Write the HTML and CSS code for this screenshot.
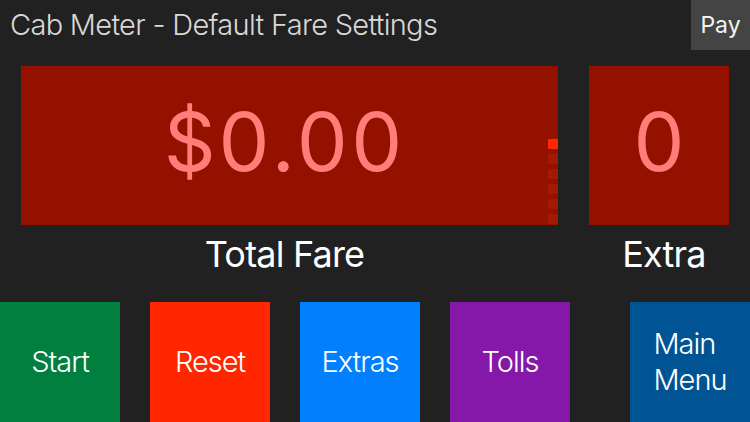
FILE: index.html
```html
<!DOCTYPE html>
<html lang="en">
<head>
  <meta charset="UTF-8">
  <meta name="viewport" content="width=device-width, initial-scale=1.0">
  <title>Cab Meter</title>
  <link rel="stylesheet" href="styles.css">
</head>
<body>

  <div class="header">
    <h1 class="title">Cab Meter - Default Fare Settings</h1>
    <button class="pay-button">Pay</button>
  </div>

  <div class="displays">
    <div class="fare-box">
      <div class="fare-value">$0.00</div>
      <div class="meter">
        <span class="tick on"></span>
        <span class="tick"></span>
        <span class="tick"></span>
        <span class="tick"></span>
        <span class="tick"></span>
        <span class="tick"></span>
      </div>
    </div>
    <div class="extra-box">0</div>
  </div>

  <div class="labels">
    <span class="fare-label">Total Fare</span>
    <span class="extra-label">Extra</span>
  </div>

  <div class="controls">
    <button class="control start">Start</button>
    <button class="control reset">Reset</button>
    <button class="control extras">Extras</button>
    <button class="control tolls">Tolls</button>
    <button class="control menu"><span>Main<br>Menu</span></button>
  </div>

</body>
</html>
```

FILE: styles.css
```css
body {
  font-family: 'Inter', 'Roboto', sans-serif;
  margin: 0;
  padding: 0;
  background-color: #212121;
  color: white;
  overflow: hidden;
}

button {
  font-family: inherit;
  border: none;
  color: white;
  padding: 0;
  cursor: pointer;
}

/* Barra do topo */
.header {
  display: flex;
  justify-content: space-between;
  height: 50px;
}

.title {
  margin: 0;
  padding-left: 10px;
  font-size: 29px;
  font-weight: 300;
  line-height: 50px;
  letter-spacing: -0.7px;
  color: #d8d8d8;
}

.pay-button {
  width: 59px;
  height: 50px;
  background-color: #444444;
  font-size: 23px;
  font-weight: 400;
  color: #f2f2f2;
}

/* Mostradores */
.displays {
  display: flex;
  gap: 31px;
  margin-top: 16px;
  padding-left: 21px;
  height: 159px;
}

.fare-box {
  display: flex;
  width: 537px;
  background-color: #941100;
}

.fare-value {
  flex: 1;
  display: flex;
  align-items: center;
  justify-content: center;
  padding-bottom: 6px;
  font-size: 81px;
  line-height: 1;
  letter-spacing: 2px;
  font-feature-settings: "tnum";
  color: #ff7e79;
}

.meter {
  display: flex;
  flex-direction: column;
  justify-content: flex-end;
  gap: 5px;
  width: 10px;
  padding-bottom: 1px;
}

.tick {
  height: 10px;
  background-color: #a31a00;
}

.tick.on {
  background-color: #ff2600;
}

.extra-box {
  display: flex;
  align-items: center;
  justify-content: center;
  width: 140px;
  padding-bottom: 6px;
  background-color: #941100;
  font-size: 81px;
  line-height: 1;
  font-feature-settings: "tnum";
  color: #ff7e79;
}

.labels {
  display: flex;
  gap: 41px;
  margin-top: 7px;
  padding-left: 21px;
  height: 44px;
  font-size: 36px;
  line-height: 44px;
  letter-spacing: -0.8px;
}

.fare-label {
  width: 527px;
  text-align: center;
}

.extra-label {
  width: 150px;
  text-align: center;
}

/* Botoes de controle */
.controls {
  display: flex;
  gap: 30px;
  margin-top: 26px;
}

.control {
  width: 120px;
  height: 120px;
  font-size: 29px;
  font-weight: 300;
  line-height: 36px;
  letter-spacing: -1px;
}

.start {
  background-color: #007f3f;
}

.reset {
  background-color: #ff2600;
}

.extras {
  background-color: #0080ff;
}

.tolls {
  background-color: #8518a8;
}

.menu {
  margin-left: 30px;
  background-color: #005493;
}

.menu span {
  display: inline-block;
  text-align: left;
}
```
